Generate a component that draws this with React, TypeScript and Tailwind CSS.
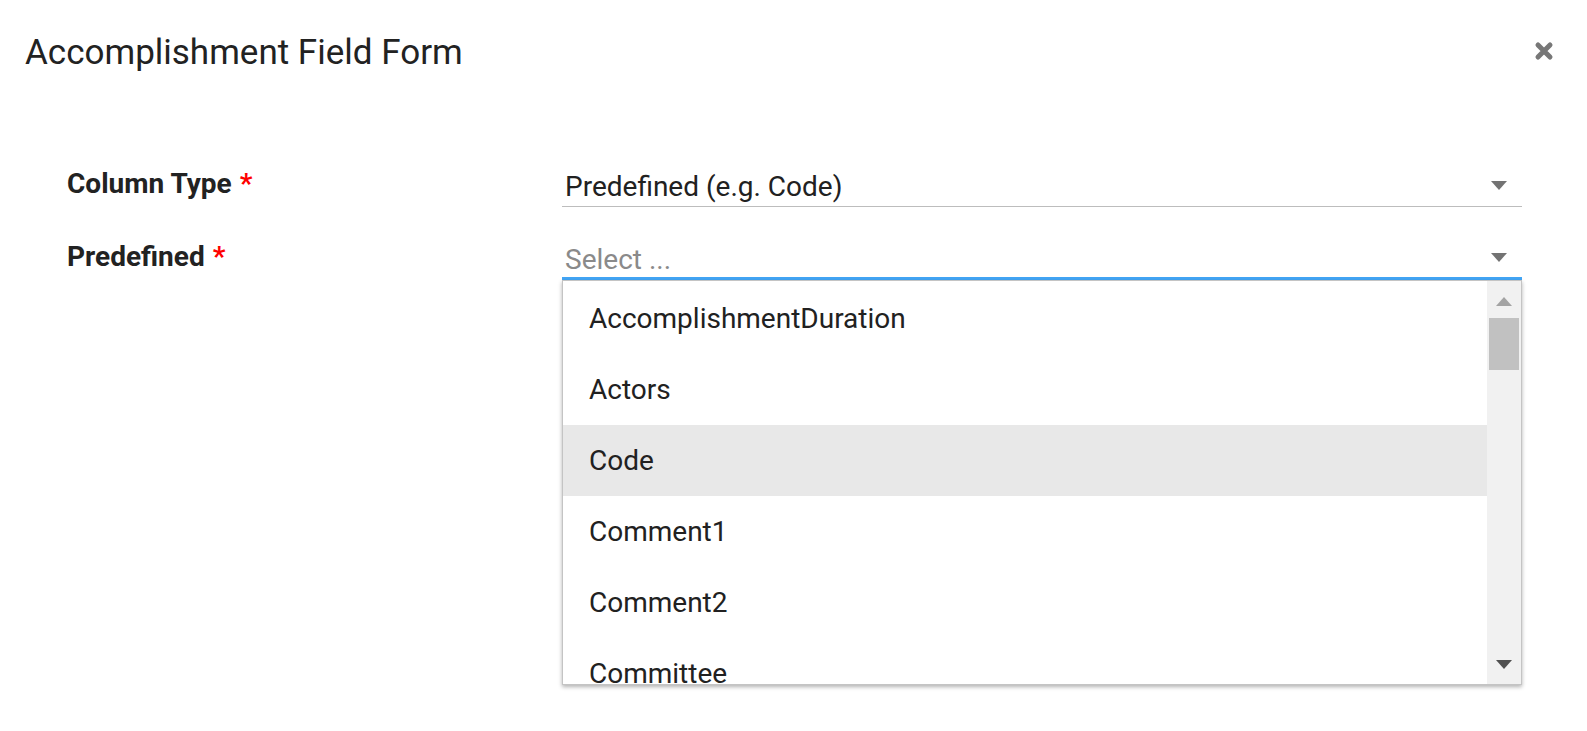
import React from "react";

const OPTIONS = ["AccomplishmentDuration", "Actors", "Code", "Comment1", "Comment2", "Committee"];

function Caret({ className }: { className?: string }) {
  return (
    <svg width="16" height="9" viewBox="0 0 16 9" className={className}>
      <path d="M0 0 L16 0 L8 9 Z" fill="currentColor" />
    </svg>
  );
}

function CloseIcon() {
  return (
    <svg width="20" height="20" viewBox="0 0 20 20" className="text-[#777]">
      <path d="M4 4 L16 16 M16 4 L4 16" stroke="currentColor" strokeWidth="5" strokeLinecap="round" />
    </svg>
  );
}

export default function App() {
  return (
    <div className="relative h-[731px] w-full overflow-hidden bg-white font-['Roboto',sans-serif] text-[#212121]">
      {/* header */}
      <div className="flex h-[102px] items-start justify-between pl-[25px] pr-[33px] pt-[30px]">
        <h1 className="text-[35px] leading-[46px] font-normal text-[#222]">Accomplishment Field Form</h1>
        <button className="mt-[11px]">
          <CloseIcon />
        </button>
      </div>

      {/* form */}
      <div className="mt-[63px] flex flex-col gap-[31px] pl-[67px] pr-[65px]">
        <div className="grid grid-cols-[495px_1fr]">
          <label className="flex h-[41px] items-center pb-[3px] text-[28px] font-bold text-[#222]">
            Column Type <span className="ml-[8px] text-[#f00]">*</span>
          </label>
          <div className="flex h-[42px] items-center justify-between border-b border-[#bdbdbd] pl-[3px] pr-[15px] pt-[3px]">
            <span className="text-[28px] leading-none">Predefined (e.g. Code)</span>
            <Caret className="-mt-[3px] text-[#737373]" />
          </div>
        </div>

        <div className="grid grid-cols-[495px_1fr]">
          <label className="flex h-[42px] items-center pb-[5px] text-[28px] font-bold text-[#222]">
            Predefined <span className="ml-[8px] text-[#f00]">*</span>
          </label>
          <div className="relative">
            <div className="flex h-[42px] items-center justify-between border-b-[3px] border-[#42a5f5] pl-[3px] pr-[15px] pt-[4px]">
              <span className="text-[28px] leading-none text-[#8a8a8a]">Select ...</span>
              <Caret className="-mt-[4px] text-[#737373]" />
            </div>

            {/* dropdown */}
            <div className="absolute left-0 right-0 top-[42px] z-10 flex h-[405px] border border-[#c4c4c4] bg-white shadow-[0_2px_4px_rgba(0,0,0,0.3)]">
              <ul className="flex-1 overflow-hidden pt-[2px]">
                {OPTIONS.map((o) => (
                  <li
                    key={o}
                    className={`flex h-[71px] shrink-0 items-center pl-[26px] text-[28px] ${o === "Code" ? "bg-[#e8e8e8]" : ""}`}
                  >
                    {o}
                  </li>
                ))}
              </ul>
              <div className="flex w-[34px] flex-col items-center bg-[#f1f1f1] px-[2px]">
                <Caret className="mt-[16px] rotate-180 text-[#a3a3a3]" />
                <div className="mt-[12px] h-[52px] w-full bg-[#c1c1c1]" />
                <div className="flex-1" />
                <Caret className="mb-[15px] text-[#505050]" />
              </div>
            </div>
          </div>
        </div>
      </div>
    </div>
  );
}
